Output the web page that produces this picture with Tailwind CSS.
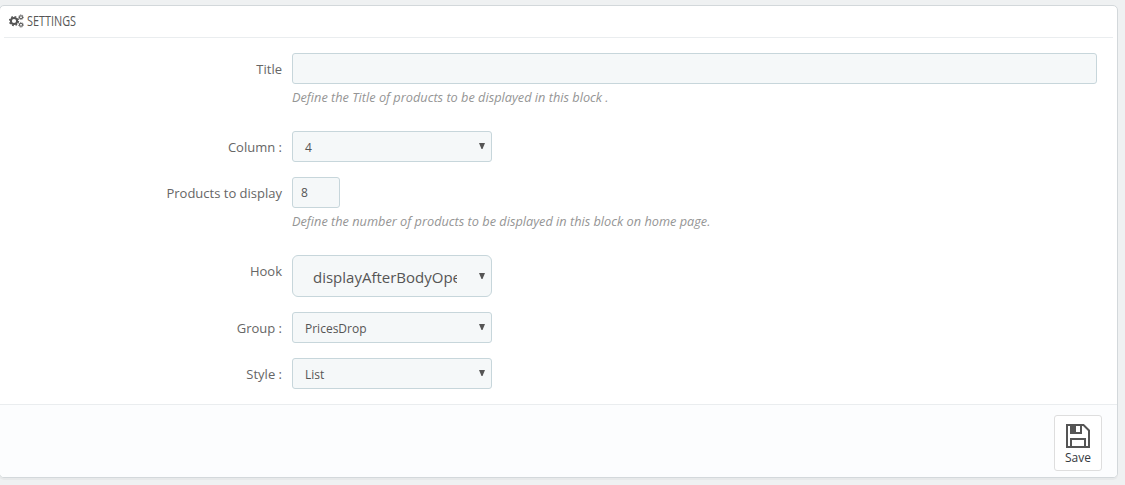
<!DOCTYPE html>
<html lang="en">
<head>
<meta charset="utf-8">
<title>Settings</title>
<script src="https://cdn.jsdelivr.net/npm/@tailwindcss/browser@4"></script>
</head>
<body class="h-[485px] overflow-hidden bg-[#eff1f2] pt-[5px] font-['Open_Sans',sans-serif] text-[13px] text-[#666]">
<section class="-ml-px flex h-[473px] w-[1119px] flex-col overflow-hidden rounded-[5px] border border-[#d3d8db] bg-white shadow-[0_2px_0_rgba(0,0,0,0.03)]">
  <header class="mx-[4px] flex h-8 shrink-0 items-center border-b border-[#eaedef] pb-[2px] pl-[5px]">
    <svg class="h-[14px] w-[15px] shrink-0" viewBox="0 0 15 14" fill="none" stroke="#555">
      <circle cx="5" cy="7" r="3.1" stroke-width="2"/>
      <circle cx="5" cy="7" r="4.4" stroke-width="1.5" stroke-dasharray="1.75 1.706"/>
      <circle cx="12" cy="3.2" r="1.5" stroke-width="1.1"/>
      <circle cx="12" cy="3.2" r="2.4" stroke-width=".8" stroke-dasharray="1 .885"/>
      <circle cx="12" cy="10.8" r="1.5" stroke-width="1.1"/>
      <circle cx="12" cy="10.8" r="2.4" stroke-width=".8" stroke-dasharray="1 .885"/>
    </svg>
    <h3 class="-mt-px ml-[3px] origin-left scale-x-[0.725] text-[15px] leading-5 text-[#555]">SETTINGS</h3>
  </header>
  <form class="flex flex-1 flex-col pt-[15px]">
    <div class="flex h-[78px] gap-[10px]">
      <label class="w-[282px] pt-[7px] text-right leading-[18px]">Title</label>
      <div>
        <div class="h-[31px] w-[805px] rounded-[3px] border border-[#c7d6db] bg-[#f5f8f9]"></div>
        <p class="mt-[5px] w-max origin-left scale-x-[1.062] text-[12px] leading-[18px] text-[#959595] italic">Define the Title of products to be displayed in this block .</p>
      </div>
    </div>
    <div class="flex h-[46px] gap-[10px]">
      <label class="w-[282px] pt-[7px] text-right leading-[18px]">Column :</label>
      <div class="flex h-[31px] w-[200px] items-center justify-between rounded-[3px] border border-[#c7d6db] bg-[#f5f8f9] pr-[6px] pl-3 text-[12px] text-[#555]">
        <span class="pt-[2px]">4</span>
        <svg class="-mt-px h-[6px] w-[6px]" viewBox="0 0 6 6"><path d="M0 0h6L3.5 6h-1z" fill="#555"/></svg>
      </div>
    </div>
    <div class="flex h-[78px] gap-[10px]">
      <label class="w-[282px] pt-[7px] text-right leading-[18px]">Products to display</label>
      <div>
        <div class="flex h-[31px] w-[48px] items-center rounded-[3px] border border-[#c7d6db] bg-[#f5f8f9] pl-2 text-[12px] text-[#555]">8</div>
        <p class="mt-[5px] w-max origin-left scale-x-[1.062] text-[12px] leading-[18px] text-[#959595] italic">Define the number of products to be displayed in this block on home page.</p>
      </div>
    </div>
    <div class="flex h-[57px] gap-[10px]">
      <label class="w-[282px] pt-[7px] text-right leading-[18px]">Hook</label>
      <div class="flex h-[42px] w-[200px] items-center justify-between rounded-[6px] border border-[#c7d6db] bg-[#f5f8f9] pr-[6px] pl-5 text-[15px] text-[#555]">
        <span class="w-[144px] overflow-hidden pt-[3px] whitespace-nowrap">displayAfterBodyOpe</span>
        <svg class="-mt-px h-[6px] w-[6px]" viewBox="0 0 6 6"><path d="M0 0h6L3.5 6h-1z" fill="#555"/></svg>
      </div>
    </div>
    <div class="flex h-[46px] gap-[10px]">
      <label class="w-[282px] pt-[7px] text-right leading-[18px]">Group :</label>
      <div class="flex h-[31px] w-[200px] items-center justify-between rounded-[3px] border border-[#c7d6db] bg-[#f5f8f9] pr-[6px] pl-3 text-[12px] text-[#555]">
        <span class="pt-[2px]">PricesDrop</span>
        <svg class="-mt-px h-[6px] w-[6px]" viewBox="0 0 6 6"><path d="M0 0h6L3.5 6h-1z" fill="#555"/></svg>
      </div>
    </div>
    <div class="flex h-[46px] gap-[10px]">
      <label class="w-[282px] pt-[7px] text-right leading-[18px]">Style :</label>
      <div class="flex h-[31px] w-[200px] items-center justify-between rounded-[3px] border border-[#c7d6db] bg-[#f5f8f9] pr-[6px] pl-3 text-[12px] text-[#555]">
        <span class="pt-[2px]">List</span>
        <svg class="-mt-px h-[6px] w-[6px]" viewBox="0 0 6 6"><path d="M0 0h6L3.5 6h-1z" fill="#555"/></svg>
      </div>
    </div>
  </form>
  <footer class="flex h-[73px] shrink-0 justify-end border-t border-[#eaedef] bg-[#fcfdfe] pt-[10px] pr-[15px]">
    <button type="button" class="flex h-[56px] w-[48px] flex-col items-center rounded-[3px] border border-[#dedede] bg-white pt-2 text-[12px] text-[#363a41]">
      <svg class="h-6 w-6 shrink-0" viewBox="0 0 24 24" fill="none" stroke="#555" stroke-width="2">
        <path d="M1 1h16.500L23 6.500V23H1z"/>
        <path d="M5 23v-8h14v8"/>
        <path d="M4 0h12v10H4zM10 2v6h4V2z" fill="#555" fill-rule="evenodd" stroke="none"/>
      </svg>
      <span class="mt-px leading-[18px]">Save</span>
    </button>
  </footer>
</section>
</body>
</html>
